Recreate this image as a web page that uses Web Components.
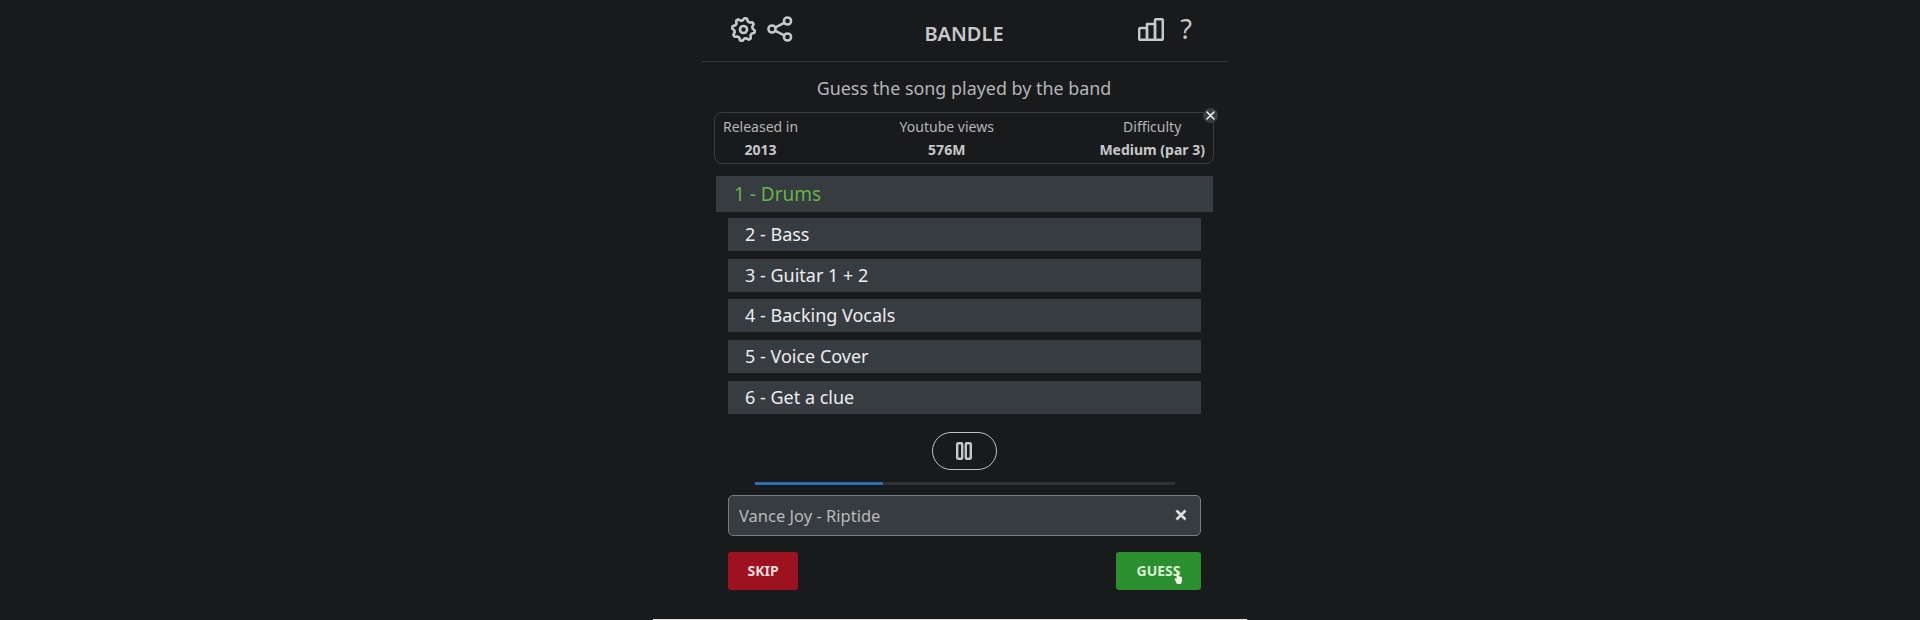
<!DOCTYPE html>
<html lang="en">
<head>
<meta charset="utf-8">
<title>Bandle</title>
<style>
  html, body { margin: 0; height: 620px; overflow: hidden; background: #181a1c; }
  body { font-family: "Noto Sans", "Open Sans", sans-serif; color: #c4c6c8; }
</style>
</head>
<body>
<bandle-app>
  <bandle-header title="BANDLE"></bandle-header>
  <p-subtitle>Guess the song played by the band</p-subtitle>
  <info-panel></info-panel>
  <stem-list>
    <stem-row active>1 - Drums</stem-row>
    <stem-row>2 - Bass</stem-row>
    <stem-row>3 - Guitar 1 + 2</stem-row>
    <stem-row>4 - Backing Vocals</stem-row>
    <stem-row>5 - Voice Cover</stem-row>
    <stem-row>6 - Get a clue</stem-row>
  </stem-list>
  <play-control></play-control>
  <guess-form value="Vance Joy - Riptide"></guess-form>
</bandle-app>
<script>
// eight lobed cog outline, rounded by the stroke join
function cogPath() {
  let d = '';
  for (let i = 0; i < 32; i++) {
    const a = (i / 32) * Math.PI * 2;
    const r = [11, 11, 8.8, 8.8][i % 4];
    const x = (12 + r * Math.cos(a + 0.1)).toFixed(2);
    const y = (12 + r * Math.sin(a + 0.1)).toFixed(2);
    d += (i ? 'L' : 'M') + x + ' ' + y;
  }
  return d + 'z';
}
class BandleApp extends HTMLElement {
  constructor() { super(); this.attachShadow({ mode: 'open' }); }
  connectedCallback() {
    this.shadowRoot.innerHTML = `
      <style>
        :host { display: block; height: 620px; position: relative; overflow: hidden; }
        .col { width: 526px; margin-left: 702px; display: flex; flex-direction: column; }
        .foot { position: absolute; left: 653px; bottom: 0; width: 594px; height: 1px; background: #e8e8e8; }
      </style>
      <div class="col"><slot></slot></div>
      <div class="foot"></div>
    `;
  }
}
class BandleHeader extends HTMLElement {
  constructor() { super(); this.attachShadow({ mode: 'open' }); }
  connectedCallback() {
    this.shadowRoot.innerHTML = `
      <style>
        :host { display: block; }
        .bar { height: 62px; box-sizing: border-box; border-bottom: 1px solid #33363a; display: grid; grid-template-columns: 1fr auto 1fr; align-items: start; }
        .left, .right { display: flex; align-items: center; height: 60px; }
        .left { gap: 11px; padding-left: 29px; }
        .right { justify-content: flex-end; gap: 16px; padding-right: 36px; }
        svg { display: block; fill: none; stroke: #c6c8ca; stroke-width: 2.5; stroke-linecap: round; stroke-linejoin: round; transform: translateY(-1px); }
        h1 { margin: 0; font: 600 20px/67px "Noto Sans", sans-serif; color: #c6c8ca; transform: translateX(-1px); }
        .q { font-size: 27px; line-height: 60px; color: #c6c8ca; transform: translateY(-1px); }
      </style>
      <div class="bar">
        <div class="left">
          <svg width="25" height="25" viewBox="0 0 24 24"><circle cx="12" cy="12" r="3.4"/><path d="${cogPath()}"/></svg>
          <svg width="26" height="26" viewBox="0 0 26 26"><circle cx="20.5" cy="5" r="3.6"/><circle cx="5" cy="13" r="3.6"/><circle cx="20.5" cy="21" r="3.6"/><path d="M8.3 14.8l9 4.5M17.3 6.8l-9 4.5"/></svg>
        </div>
        <h1>${this.getAttribute('title')}</h1>
        <div class="right">
          <svg width="26" height="23" viewBox="0 0 26 23"><rect x="1.2" y="10" width="7.8" height="11.8" rx="1.2"/><rect x="9" y="6" width="8" height="15.8"/><rect x="17" y="1.2" width="7.8" height="20.6" rx="1.2"/></svg>
          <span class="q">?</span>
        </div>
      </div>
    `;
  }
}
class PSubtitle extends HTMLElement {
  constructor() { super(); this.attachShadow({ mode: 'open' }); }
  connectedCallback() {
    this.shadowRoot.innerHTML = `
      <style>
        :host { display: block; text-align: center; font-size: 17.9px; line-height: 26px; padding: 13px 0 11px; color: #b4b6b8; transform: translateX(-1px); }
      </style>
      <slot></slot>
    `;
  }
}
class InfoPanel extends HTMLElement {
  constructor() { super(); this.attachShadow({ mode: 'open' }); }
  connectedCallback() {
    this.shadowRoot.innerHTML = `
      <style>
        :host { display: block; margin: 0 14px 0 12px; position: relative; }
        .box { height: 52px; box-sizing: border-box; border: 1px solid #3a3d40; border-radius: 8px; padding: 3px 8px 0 8px; display: flex; justify-content: space-between; font-size: 14px; line-height: 21px; color: #b4b6b8; }
        .c { display: flex; flex-direction: column; align-items: center; gap: 2px; }
        .c:nth-child(2) { transform: translateX(-2px); }
        b { font-weight: 700; font-size: 14px; color: #c6c8ca; }
        .x { position: absolute; top: -4px; right: -4px; width: 15px; height: 15px; border-radius: 50%; background: #3a3d40; display: flex; align-items: center; justify-content: center; }
        .x svg { display: block; stroke: #eee; stroke-width: 1.6; stroke-linecap: round; }
      </style>
      <div class="box">
        <div class="c"><span>Released in</span><b>2013</b></div>
        <div class="c"><span>Youtube views</span><b>576M</b></div>
        <div class="c"><span>Difficulty</span><b>Medium (par 3)</b></div>
      </div>
      <div class="x"><svg width="9" height="9" viewBox="0 0 9 9"><path d="M1 1l7 7M8 1l-7 7"/></svg></div>
    `;
  }
}
class StemList extends HTMLElement {
  constructor() { super(); this.attachShadow({ mode: 'open' }); }
  connectedCallback() {
    this.shadowRoot.innerHTML = `
      <style>
        :host { display: flex; flex-direction: column; gap: 7.8px; margin-top: 12px; }
      </style>
      <slot></slot>
    `;
  }
}
class StemRow extends HTMLElement {
  constructor() { super(); this.attachShadow({ mode: 'open' }); }
  connectedCallback() {
    this.shadowRoot.innerHTML = `
      <style>
        :host { display: block; margin: 0 27px 0 26px; height: 33px; box-sizing: border-box; padding-left: 17px; background: #373c40; color: #eceeef; font-size: 18px; line-height: 33px; }
        :host([active]) { margin: 0 15px -2px 14px; height: 36px; padding-left: 18px; color: #66b347; font-size: 19px; line-height: 36px; }
      </style>
      <slot></slot>
    `;
  }
}
class PlayControl extends HTMLElement {
  constructor() { super(); this.attachShadow({ mode: 'open' }); }
  connectedCallback() {
    this.shadowRoot.innerHTML = `
      <style>
        :host { display: flex; flex-direction: column; align-items: center; margin-top: 18px; }
        button { width: 65px; height: 38px; box-sizing: border-box; border: 1.5px solid #c0c2c4; border-radius: 19px; background: transparent; padding: 0; display: flex; align-items: center; justify-content: center; transform: translateX(-1px); }
        svg { display: block; fill: none; stroke: #c6c8ca; stroke-width: 2.4; }
        .track { width: 420px; height: 3px; margin-top: 12px; background: #2f3134; }
        .fill { width: 128px; height: 100%; background: #2a6fb5; }
      </style>
      <button aria-label="Pause"><svg width="16" height="18" viewBox="0 0 16 18"><rect x="1.2" y="1.2" width="5" height="15.6" rx="1"/><rect x="9.8" y="1.2" width="5" height="15.6" rx="1"/></svg></button>
      <div class="track"><div class="fill"></div></div>
    `;
  }
}
class GuessForm extends HTMLElement {
  constructor() { super(); this.attachShadow({ mode: 'open' }); }
  connectedCallback() {
    this.shadowRoot.innerHTML = `
      <style>
        :host { display: block; margin: 10px 27px 0 26px; }
        .field { height: 41px; box-sizing: border-box; border: 1px solid #7a7d80; border-radius: 5px; background: #373c40; display: flex; align-items: center; justify-content: space-between; padding: 0 13px 0 10px; font-size: 16.5px; color: #b8babc; }
        .field svg { display: block; stroke: #dcdedf; stroke-width: 2.6; }
        .btns { display: flex; justify-content: space-between; margin-top: 16px; }
        .btn { height: 38px; border-radius: 3px; display: flex; align-items: center; justify-content: center; font-size: 14px; font-weight: 700; position: relative; }
        .skip { width: 70px; background: #9e1121; color: #f2dcdc; }
        .guess { width: 85px; background: #2b8e2f; color: #d8f2d4; }
        .cursor { position: absolute; left: 58px; top: 19px; }
      </style>
      <div class="field"><span>${this.getAttribute('value')}</span><svg width="12" height="12" viewBox="0 0 12 12"><path d="M1.5 1.5l9 9M10.5 1.5l-9 9"/></svg></div>
      <div class="btns">
        <div class="btn skip">SKIP</div>
        <div class="btn guess">GUESS<svg class="cursor" width="9" height="13" viewBox="0 0 9 13"><path d="M2.5 1a1 1 0 0 1 2 0v4l3.5 1v4l-1 3H3L.5 8l1-1 1 1z" fill="#eef2ea"/></svg></div>
      </div>
    `;
  }
}
customElements.define('bandle-app', BandleApp);
customElements.define('bandle-header', BandleHeader);
customElements.define('p-subtitle', PSubtitle);
customElements.define('info-panel', InfoPanel);
customElements.define('stem-list', StemList);
customElements.define('stem-row', StemRow);
customElements.define('play-control', PlayControl);
customElements.define('guess-form', GuessForm);
</script>
</body>
</html>
